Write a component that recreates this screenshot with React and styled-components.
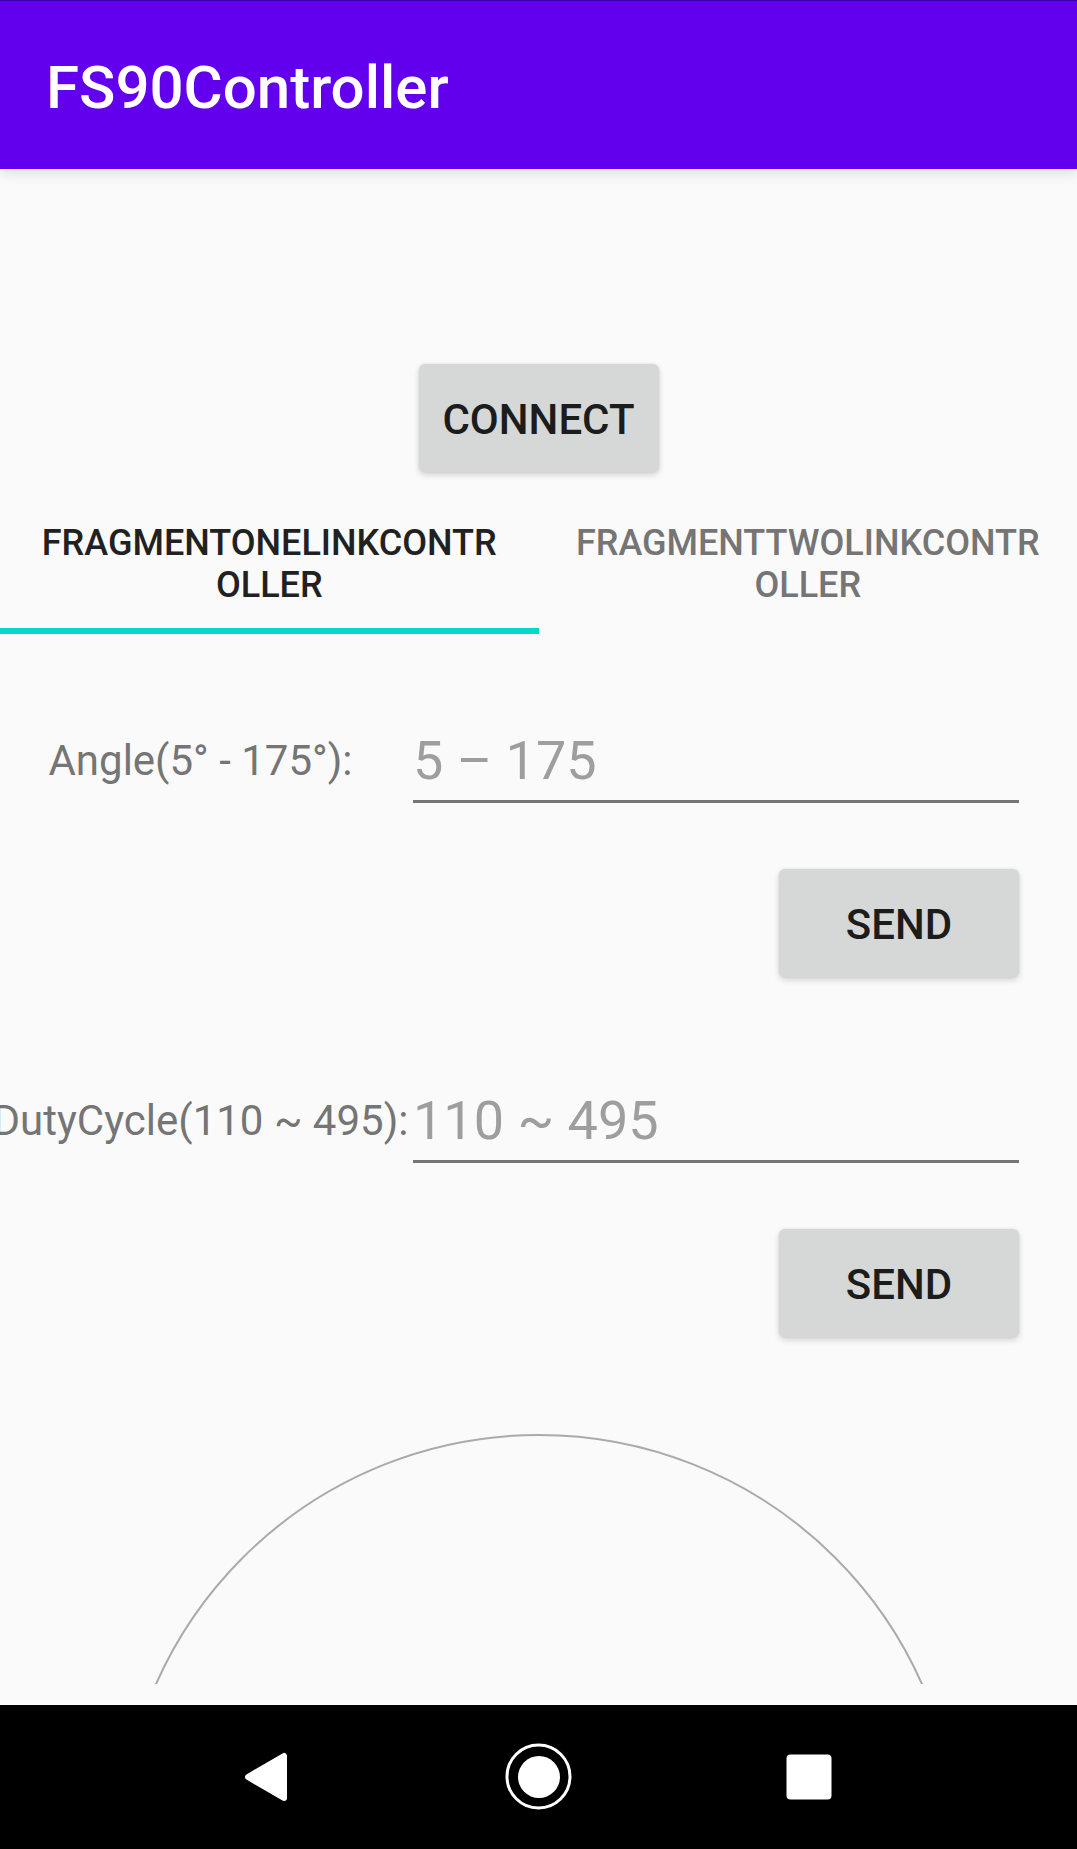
import React, { useState } from "react";
import styled, { createGlobalStyle } from "styled-components";

const GlobalStyle = createGlobalStyle`
  *, *::before, *::after { box-sizing: border-box; }
  body {
    margin: 0;
    background: #fafafa;
    font-family: Roboto, "Noto Sans", sans-serif;
  }
`;

const Screen = styled.div`
  min-height: 100vh;
  display: flex;
  flex-direction: column;
  overflow-x: hidden;
  background: #fafafa;
`;

const AppBar = styled.header`
  height: 169px;
  display: flex;
  align-items: center;
  padding: 6px 46px 0;
  background: #6200ee;
  border-top: 1px solid #3700b3;
  box-shadow: 0 4px 12px rgba(0, 0, 0, 0.12);
`;

const Title = styled.h1`
  margin: 0;
  color: #fff;
  font-size: 60px;
  line-height: 70px;
  font-weight: 500;
`;

const Content = styled.main`
  flex: 1;
  display: flex;
  flex-direction: column;
  padding-top: 195px;
`;

const ActionButton = styled.button`
  width: 240px;
  height: 108px;
  padding: 4px 0 0;
  border: 0;
  border-radius: 6px;
  background: #d6d8d7;
  color: #1c1c1c;
  font: 500 42px/50px Roboto, "Noto Sans", sans-serif;
  text-transform: uppercase;
  box-shadow: 0 3px 6px rgba(0, 0, 0, 0.16), 0 0 3px rgba(0, 0, 0, 0.08);
  align-self: ${(p) => p.$align};
`;

const TabList = styled.div`
  display: grid;
  grid-template-columns: 1fr 1fr;
  margin-top: 18px;
`;

const Tab = styled.button`
  height: 144px;
  padding: 9px 36px 0;
  border: 0;
  border-bottom: 6px solid ${(p) => (p.$selected ? "#03dac5" : "transparent")};
  background: none;
  color: ${(p) => (p.$selected ? "#212121" : "#757575")};
  font: 500 36px/42px Roboto, "Noto Sans", sans-serif;
  text-align: center;
  text-transform: uppercase;
  word-break: break-all;
`;

const Panel = styled.section`
  flex: 1;
  display: flex;
  flex-direction: column;
  padding-top: 82px;
`;

const Forms = styled.div`
  display: flex;
  flex-direction: column;
  gap: 99px;
  padding-bottom: 97px;
`;

const Form = styled.form`
  display: flex;
  flex-direction: column;
  gap: 66px;
  padding-right: 58px;
`;

const Field = styled.div`
  display: grid;
  grid-template-columns: 401px minmax(0, 1fr);
  column-gap: 12px;
  align-items: center;
`;

const Label = styled.label`
  justify-self: center;
  padding-top: 2px;
  white-space: nowrap;
  color: #757575;
  font-size: 42px;
  line-height: 50px;
`;

const Input = styled.input`
  width: 100%;
  height: 87px;
  padding: 4px 0 0;
  border: 0;
  border-bottom: 3px solid #757575;
  border-radius: 0;
  outline: 0;
  background: none;
  color: #212121;
  font: 400 54px/64px Roboto, "Noto Sans", sans-serif;

  &::placeholder {
    color: #9e9e9e;
    opacity: 1;
  }
`;

const Dial = styled.svg`
  display: block;
  align-self: center;
`;

const NavBar = styled.nav`
  height: 144px;
  display: flex;
  align-items: center;
  justify-content: center;
  gap: 126px;
  background: #000;
`;

const NavButton = styled.button`
  width: 144px;
  height: 144px;
  padding: 0;
  border: 0;
  background: none;

  svg { display: block; }
`;

const tabs = ["FragmentOneLinkController", "FragmentTwoLinkController"];

const fields = [
  { id: "angle", label: "Angle(5° - 175°):", hint: "5 – 175" },
  { id: "duty", label: "DutyCycle(110 ~ 495):", hint: "110 ~ 495" },
];

function ValueForm({ id, label, hint }) {
  return (
    <Form onSubmit={(e) => e.preventDefault()}>
      <Field>
        <Label htmlFor={id}>{label}</Label>
        <Input id={id} type="text" inputMode="numeric" placeholder={hint} />
      </Field>
      <ActionButton type="submit" $align="flex-end">Send</ActionButton>
    </Form>
  );
}

export default function App() {
  const [active, setActive] = useState(0);
  return (
    <Screen>
      <GlobalStyle />
      <AppBar>
        <Title>FS90Controller</Title>
      </AppBar>
      <Content>
        <ActionButton type="button" $align="center">Connect</ActionButton>
        <TabList role="tablist">
          {tabs.map((name, i) => (
            <Tab
              key={name}
              type="button"
              role="tab"
              aria-selected={active === i}
              $selected={active === i}
              onClick={() => setActive(i)}
            >
              {name}
            </Tab>
          ))}
        </TabList>
        <Panel role="tabpanel">
          <Forms>
            {fields.map((f) => (
              <ValueForm key={f.id} {...f} />
            ))}
          </Forms>
          <Dial width="840" height="250" viewBox="0 0 840 250" aria-hidden="true">
            <circle cx="420" cy="420" r="419" fill="none" stroke="#aaaaaa" strokeWidth="2" />
          </Dial>
        </Panel>
      </Content>
      <NavBar aria-label="System">
        <NavButton type="button" aria-label="Back">
          <svg width="144" height="144" viewBox="0 0 144 144">
            <path d="M51 72 L87 51 V93 Z" fill="#fff" stroke="#fff" strokeWidth="6" strokeLinejoin="round" />
          </svg>
        </NavButton>
        <NavButton type="button" aria-label="Home">
          <svg width="144" height="144" viewBox="0 0 144 144">
            <circle cx="71.5" cy="71.5" r="31.5" fill="none" stroke="#fff" strokeWidth="3" />
            <circle cx="72" cy="72" r="21" fill="#fff" />
          </svg>
        </NavButton>
        <NavButton type="button" aria-label="Recent apps">
          <svg width="144" height="144" viewBox="0 0 144 144">
            <rect x="49.5" y="49.5" width="45" height="45" rx="4" fill="#fff" />
          </svg>
        </NavButton>
      </NavBar>
    </Screen>
  );
}
